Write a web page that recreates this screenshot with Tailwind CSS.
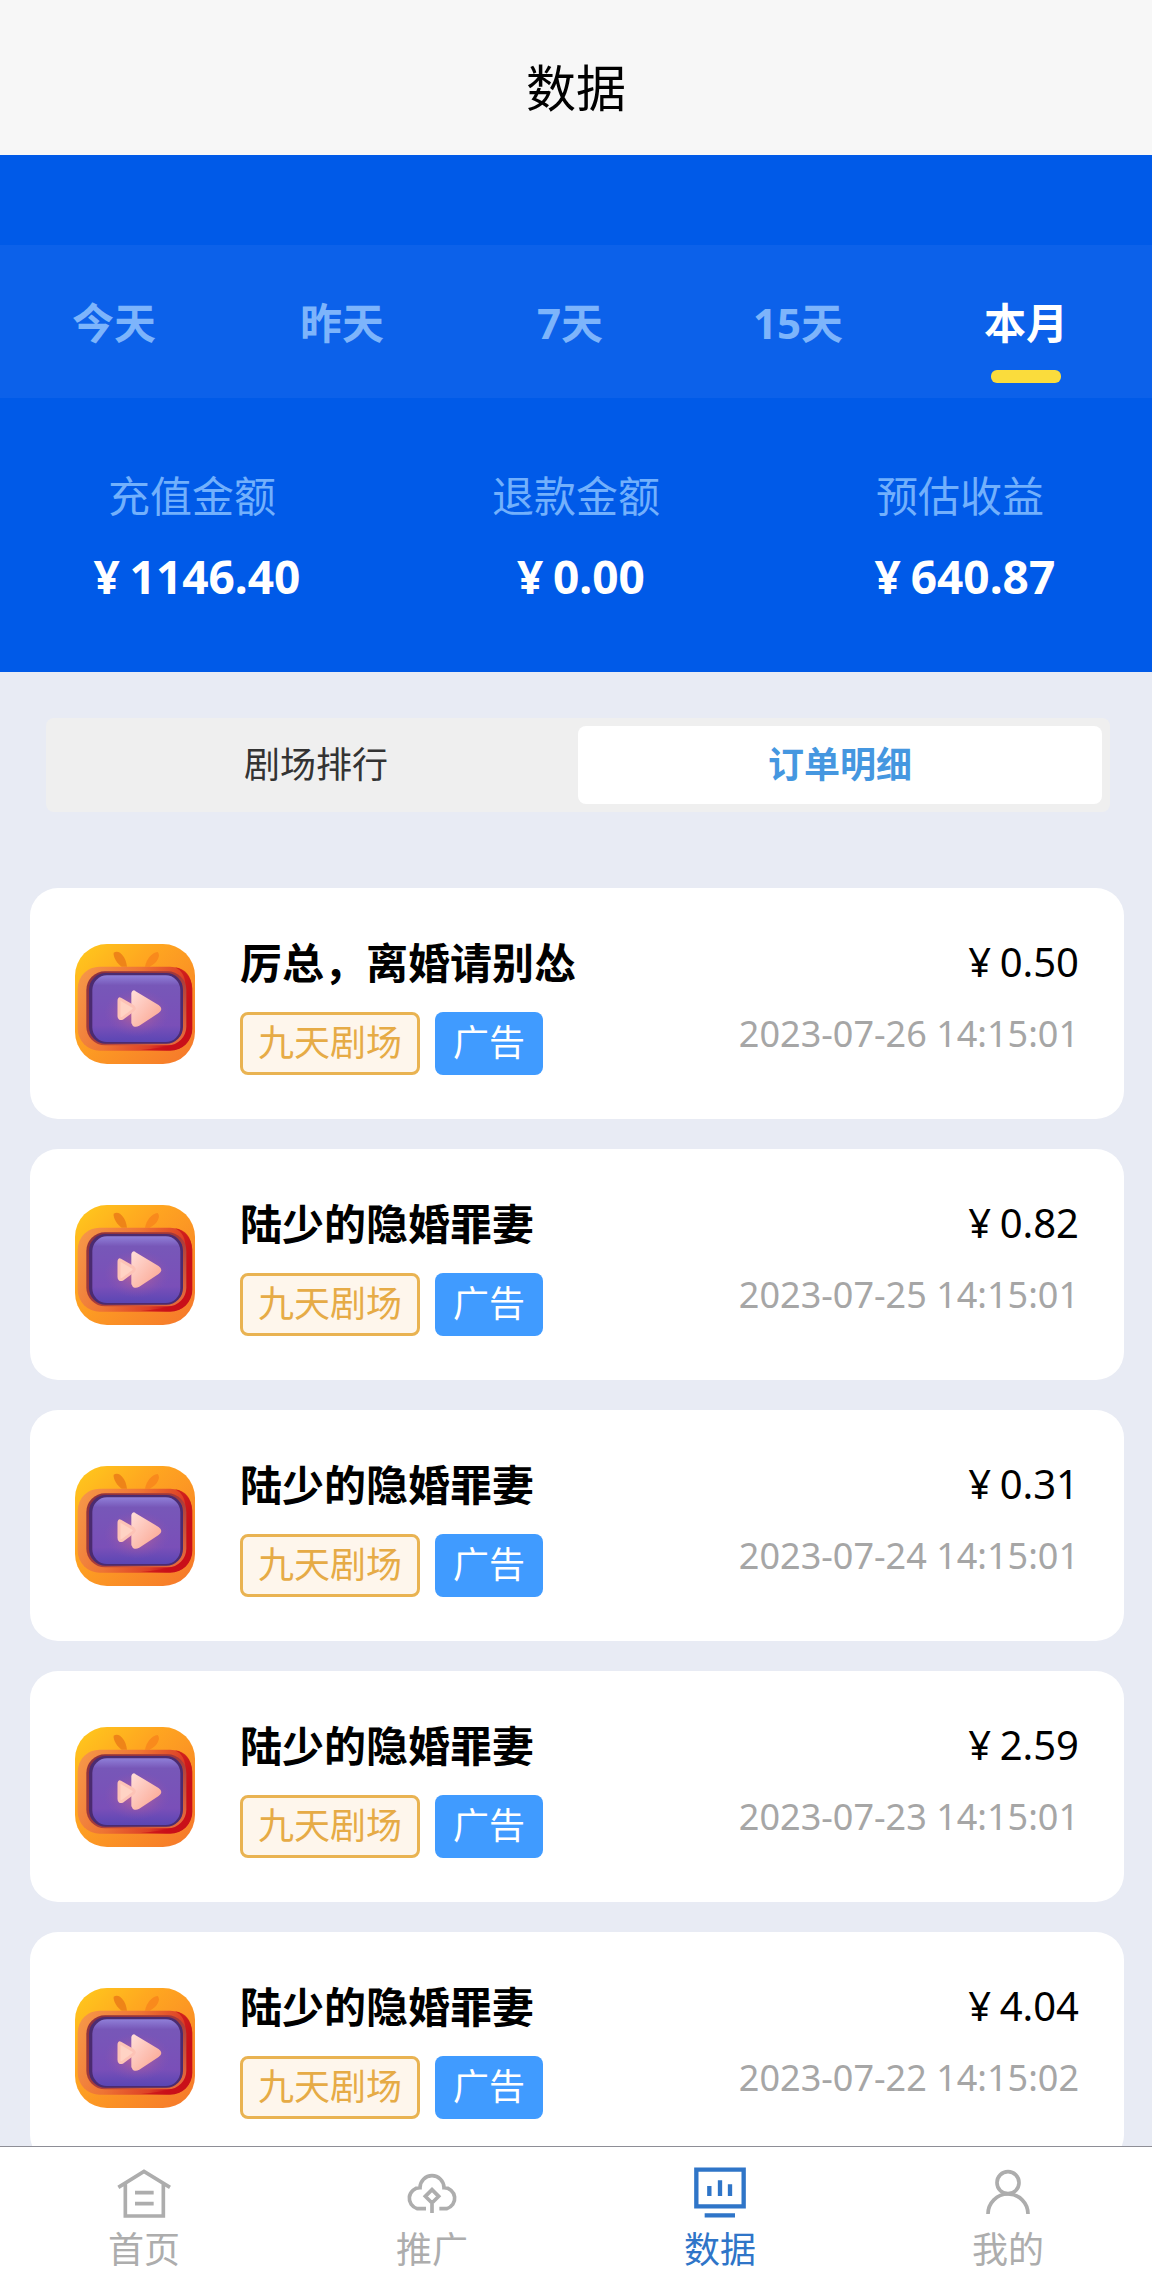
<!DOCTYPE html>
<html lang="zh-CN">
<head>
    <meta charset="UTF-8">
    <meta name="viewport" content="width=device-width, initial-scale=1.0">
    <title>数据</title>
    <script src="https://cdn.jsdelivr.net/npm/@tailwindcss/browser@4"></script>
</head>
<body class="h-screen flex flex-col overflow-hidden bg-[#e8ebf4] text-black font-['Noto_Sans','Noto_Sans_CJK_SC',sans-serif]">
    <!-- Theater icon -->
    <svg class="w-0 h-0 shrink-0" aria-hidden="true">
        <defs>
            <linearGradient id="shell" x1="0" y1="0" x2="1" y2="1">
                <stop offset="0" stop-color="#ffcb1c"/>
                <stop offset="0.35" stop-color="#ffa620"/>
                <stop offset="1" stop-color="#f5762c"/>
            </linearGradient>
            <linearGradient id="frame" x1="0" y1="0" x2="1" y2="0.35">
                <stop offset="0" stop-color="#f79a4a"/>
                <stop offset="0.5" stop-color="#ee7434"/>
                <stop offset="0.85" stop-color="#dd4026"/>
                <stop offset="1" stop-color="#c8101c"/>
            </linearGradient>
            <linearGradient id="rim" x1="0" y1="0" x2="1" y2="1">
                <stop offset="0" stop-color="#8a3040"/>
                <stop offset="0.5" stop-color="#a33a3c"/>
                <stop offset="1" stop-color="#f0703a"/>
            </linearGradient>
            <linearGradient id="screen" x1="0" y1="0" x2="0" y2="1">
                <stop offset="0" stop-color="#8f7fd8"/>
                <stop offset="0.15" stop-color="#7757b8"/>
                <stop offset="0.75" stop-color="#7a4fb8"/>
                <stop offset="1" stop-color="#5a46b4"/>
            </linearGradient>
            <radialGradient id="glow">
                <stop offset="0" stop-color="#c9658f"/>
                <stop offset="1" stop-color="#8a54b0" stop-opacity="0"/>
            </radialGradient>
            <linearGradient id="play" x1="0" y1="0" x2="1" y2="1">
                <stop offset="0" stop-color="#ffdcd6"/>
                <stop offset="1" stop-color="#fba590"/>
            </linearGradient>
        </defs>
        <symbol id="tv" viewBox="0 0 360 360">
            <rect width="360" height="360" rx="96" fill="url(#shell)"/>
            <path d="M116 26c16-10 36 10 40 42h-16c-12-8-26-28-24-42z" fill="#ee8418"/>
            <path d="M248 24c10 10 0 32-24 44h-14c4-22 20-42 38-44z" fill="#f98a1c"/>
            <rect x="8" y="68" width="344" height="252" rx="66" fill="url(#frame)"/>
            <path d="M300 70c32 4 50 28 50 60v126c0 36-26 62-62 62h-90c80-8 134-20 134-70V130c0-30-10-50-32-60z" fill="#c90f18" opacity="0.7"/>
            <rect x="34" y="82" width="300" height="222" rx="56" fill="url(#rim)"/>
            <rect x="42" y="87" width="282" height="212" rx="50" fill="#4b2b70"/>
            <rect x="52" y="94" width="264" height="200" rx="44" fill="url(#screen)"/>
            <ellipse cx="186" cy="206" rx="100" ry="72" fill="url(#glow)"/>
            <path d="M178 145L248 187Q260 195 248 203L190 241Q178 248 174 236V148Q176 142 178 145z" fill="url(#play)" stroke="url(#play)" stroke-width="10" stroke-linejoin="round"/>
            <path d="M136 165L174 187Q182 193 174 199L142 223Q132 226 132 216V170Q132 163 136 165z" fill="#ffd3c4" stroke="#fdc3b6" stroke-width="9" stroke-linejoin="round"/>
        </symbol>
    </svg>

    <header class="shrink-0 bg-[#f7f7f7] h-[155px] pt-5 flex justify-center items-center">
        <h1 class="text-[50px] leading-[60px]">数据</h1>
    </header>

    <main class="flex-1 min-h-0 overflow-y-auto [scrollbar-width:none]">
        <section class="bg-[#005ae8] pt-[90px] text-[42px] leading-[60px]">
            <!-- Date range -->
            <div class="grid grid-cols-5 bg-[#0c61ea] pt-12 pb-[15px] pr-3 font-bold text-[#7db4fb]">
                <button type="button" class="flex flex-col items-center">今天</button>
                <button type="button" class="flex flex-col items-center">昨天</button>
                <button type="button" class="flex flex-col items-center">7天</button>
                <button type="button" class="flex flex-col items-center">15天</button>
                <button type="button" class="flex flex-col items-center gap-[17px] text-white">
                    本月
                    <span class="w-[70px] h-[13px] rounded-md bg-[#fadc3c]"></span>
                </button>
            </div>
            <!-- Totals -->
            <dl class="grid grid-cols-3 pt-[68px] pb-[66px] text-center">
                <div>
                    <dt class="text-[#72b0fc]">充值金额</dt>
                    <dd class="pt-5 text-[46px] font-bold text-white"><span class="inline-block w-[1em]">¥</span>1146.40</dd>
                </div>
                <div>
                    <dt class="text-[#72b0fc]">退款金额</dt>
                    <dd class="pt-5 text-[46px] font-bold text-white"><span class="inline-block w-[1em]">¥</span>0.00</dd>
                </div>
                <div>
                    <dt class="text-[#72b0fc]">预估收益</dt>
                    <dd class="pt-5 text-[46px] font-bold text-white"><span class="inline-block w-[1em]">¥</span>640.87</dd>
                </div>
            </dl>
        </section>

        <!-- Switch -->
        <div class="ml-[46px] mr-[42px] mt-[46px] p-2 grid grid-cols-2 rounded-lg bg-[#efefef] text-4xl">
            <button type="button" class="h-[78px] rounded-lg text-[#333]">剧场排行</button>
            <button type="button" class="h-[78px] rounded-lg bg-white font-bold text-[#4597e0]">订单明细</button>
        </div>

        <!-- Orders -->
        <ul class="mt-19 ml-[30px] mr-7 flex flex-col gap-[30px]">
            <li class="bg-white rounded-[28px] h-[231px] px-[45px] flex items-center">
                <svg class="w-[120px] h-[120px] shrink-0"><use href="#tv"/></svg>
                <div class="ml-[45px] flex-1 flex flex-col gap-[19px]">
                    <h2 class="text-[42px] leading-[60px] font-bold">厉总，离婚请别怂</h2>
                    <div class="flex gap-[15px] text-4xl">
                        <span class="h-[63px] px-[15px] flex items-center rounded-lg border-3 border-[#e9b352] bg-[#fef6ec] text-[#e6ab46]">九天剧场</span>
                        <span class="h-[63px] px-[18px] flex items-center rounded-lg bg-[#409bff] text-white">广告</span>
                    </div>
                </div>
                <div class="flex flex-col items-end gap-3 pb-3">
                    <span class="text-[40px] leading-[60px]"><span class="inline-block w-[1em] text-center">¥</span>0.50</span>
                    <time class="text-4xl leading-[60px] text-[#a6a6a6]">2023-07-26 14:15:01</time>
                </div>
            </li>
            <li class="bg-white rounded-[28px] h-[231px] px-[45px] flex items-center">
                <svg class="w-[120px] h-[120px] shrink-0"><use href="#tv"/></svg>
                <div class="ml-[45px] flex-1 flex flex-col gap-[19px]">
                    <h2 class="text-[42px] leading-[60px] font-bold">陆少的隐婚罪妻</h2>
                    <div class="flex gap-[15px] text-4xl">
                        <span class="h-[63px] px-[15px] flex items-center rounded-lg border-3 border-[#e9b352] bg-[#fef6ec] text-[#e6ab46]">九天剧场</span>
                        <span class="h-[63px] px-[18px] flex items-center rounded-lg bg-[#409bff] text-white">广告</span>
                    </div>
                </div>
                <div class="flex flex-col items-end gap-3 pb-3">
                    <span class="text-[40px] leading-[60px]"><span class="inline-block w-[1em] text-center">¥</span>0.82</span>
                    <time class="text-4xl leading-[60px] text-[#a6a6a6]">2023-07-25 14:15:01</time>
                </div>
            </li>
            <li class="bg-white rounded-[28px] h-[231px] px-[45px] flex items-center">
                <svg class="w-[120px] h-[120px] shrink-0"><use href="#tv"/></svg>
                <div class="ml-[45px] flex-1 flex flex-col gap-[19px]">
                    <h2 class="text-[42px] leading-[60px] font-bold">陆少的隐婚罪妻</h2>
                    <div class="flex gap-[15px] text-4xl">
                        <span class="h-[63px] px-[15px] flex items-center rounded-lg border-3 border-[#e9b352] bg-[#fef6ec] text-[#e6ab46]">九天剧场</span>
                        <span class="h-[63px] px-[18px] flex items-center rounded-lg bg-[#409bff] text-white">广告</span>
                    </div>
                </div>
                <div class="flex flex-col items-end gap-3 pb-3">
                    <span class="text-[40px] leading-[60px]"><span class="inline-block w-[1em] text-center">¥</span>0.31</span>
                    <time class="text-4xl leading-[60px] text-[#a6a6a6]">2023-07-24 14:15:01</time>
                </div>
            </li>
            <li class="bg-white rounded-[28px] h-[231px] px-[45px] flex items-center">
                <svg class="w-[120px] h-[120px] shrink-0"><use href="#tv"/></svg>
                <div class="ml-[45px] flex-1 flex flex-col gap-[19px]">
                    <h2 class="text-[42px] leading-[60px] font-bold">陆少的隐婚罪妻</h2>
                    <div class="flex gap-[15px] text-4xl">
                        <span class="h-[63px] px-[15px] flex items-center rounded-lg border-3 border-[#e9b352] bg-[#fef6ec] text-[#e6ab46]">九天剧场</span>
                        <span class="h-[63px] px-[18px] flex items-center rounded-lg bg-[#409bff] text-white">广告</span>
                    </div>
                </div>
                <div class="flex flex-col items-end gap-3 pb-3">
                    <span class="text-[40px] leading-[60px]"><span class="inline-block w-[1em] text-center">¥</span>2.59</span>
                    <time class="text-4xl leading-[60px] text-[#a6a6a6]">2023-07-23 14:15:01</time>
                </div>
            </li>
            <li class="bg-white rounded-[28px] h-[231px] px-[45px] flex items-center">
                <svg class="w-[120px] h-[120px] shrink-0"><use href="#tv"/></svg>
                <div class="ml-[45px] flex-1 flex flex-col gap-[19px]">
                    <h2 class="text-[42px] leading-[60px] font-bold">陆少的隐婚罪妻</h2>
                    <div class="flex gap-[15px] text-4xl">
                        <span class="h-[63px] px-[15px] flex items-center rounded-lg border-3 border-[#e9b352] bg-[#fef6ec] text-[#e6ab46]">九天剧场</span>
                        <span class="h-[63px] px-[18px] flex items-center rounded-lg bg-[#409bff] text-white">广告</span>
                    </div>
                </div>
                <div class="flex flex-col items-end gap-3 pb-3">
                    <span class="text-[40px] leading-[60px]"><span class="inline-block w-[1em] text-center">¥</span>4.04</span>
                    <time class="text-4xl leading-[60px] text-[#a6a6a6]">2023-07-22 14:15:02</time>
                </div>
            </li>
        </ul>
    </main>

    <!-- Tab bar -->
    <nav class="shrink-0 grid grid-cols-4 pt-[19px] pb-[17px] bg-white border-t border-[#8e8e96] text-4xl leading-12 text-[#adadad]">
        <a href="#home" class="flex flex-col items-center gap-1">
            <svg class="w-14 h-14" viewBox="0 0 168 168" fill="none" stroke="currentColor" stroke-width="11">
                <path d="M7 64L84 16l78 48M28 54v96h114V54M57 80h56M57 113h56"/>
            </svg>
            首页
        </a>
        <a href="#promote" class="flex flex-col items-center gap-1">
            <svg class="w-14 h-14" viewBox="0 0 168 168" fill="none" stroke="currentColor" stroke-width="11">
                <path d="M66 128H40a32 32 0 0 1 8-63a36 36 0 0 1 72 0a32 32 0 0 1 8 63H106M84 71l20 20-20 20-20-20zM84 111v30"/>
            </svg>
            推广
        </a>
        <a href="#data" class="flex flex-col items-center gap-1 text-[#2f75c8]">
            <svg class="w-14 h-14" viewBox="0 0 168 168" fill="none" stroke="currentColor" stroke-width="13">
                <path d="M13 11h142v110H13zM52 60v30M84 43v47M114 55v35M38 148h91"/>
            </svg>
            数据
        </a>
        <a href="#mine" class="flex flex-col items-center gap-1">
            <svg class="w-14 h-14" viewBox="0 0 168 168" fill="none" stroke="currentColor" stroke-width="11">
                <circle cx="84" cy="50" r="33"/>
                <path d="M24 144a60 60 0 0 1 120 0"/>
            </svg>
            我的
        </a>
    </nav>
</body>
</html>
